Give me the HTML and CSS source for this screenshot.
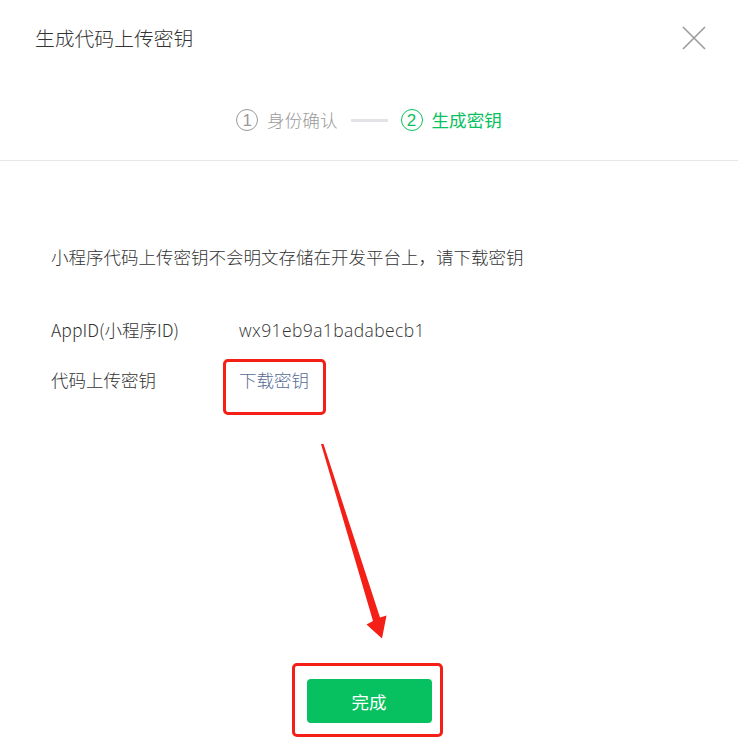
FILE: index.html
```html
<!DOCTYPE html>
<html lang="zh-CN">
<head>
<meta charset="utf-8">
<title>生成代码上传密钥</title>
<link rel="stylesheet" href="styles.css">
</head>
<body>
<div class="dialog">
  <header class="dialog-head">
    <h1 class="dialog-title">生成代码上传密钥</h1>
    <button class="close" aria-label="关闭">
      <svg width="24" height="24" viewBox="0 0 24 24"><path d="M1 1 L23 23 M23 1 L1 23" stroke="#9b9b9b" stroke-width="1.6" fill="none"/></svg>
    </button>
  </header>
  <nav class="steps">
    <div class="step done"><span class="step-num">1</span><span class="step-name">身份确认</span></div>
    <span class="step-line"></span>
    <div class="step active"><span class="step-num">2</span><span class="step-name">生成密钥</span></div>
  </nav>
  <section class="dialog-body">
    <p class="tip">小程序代码上传密钥不会明文存储在开发平台上，请下载密钥</p>
    <div class="rows">
      <div class="row"><span class="label">AppID(小程序ID)</span><span class="value">wx91eb9a1badabecb1</span></div>
      <div class="row"><span class="label">代码上传密钥</span><span class="value"><span class="marked"><a class="link" href="#">下载密钥</a><span class="mark mark-link"></span></span></span></div>
    </div>
  </section>
  <footer class="dialog-foot">
    <span class="marked"><button class="btn-primary">完成</button><span class="mark mark-btn"></span></span>
  </footer>
  <svg class="arrow" width="738" height="746" viewBox="0 0 738 746">
    <polygon points="321,444 323.5,444 380,617.5 386.5,615.5 382,638.5 366.5,624.5 373,621" fill="#f41f17"/>
  </svg>
</div>
</body>
</html>
```
FILE: styles.css
```css
* { box-sizing: border-box; }
html, body { margin: 0; padding: 0; background: #fff; }
body {
  font-family: "Noto Sans CJK SC", "Noto Sans", sans-serif;
  font-weight: 300;
  color: #333;
  width: 738px;
  height: 746px;
  overflow: hidden;
}
.dialog { position: relative; height: 746px; }
.dialog-head {
  height: 76px;
  display: flex;
  align-items: center;
  justify-content: space-between;
  padding: 0 32px 0 35px;
}
.dialog-title {
  margin: 0;
  font-size: 19.8px;
  font-weight: 300;
  line-height: 28px;
  color: #333;
}
.close {
  border: 0;
  background: none;
  padding: 0;
  width: 24px;
  height: 24px;
  display: flex;
}
.steps {
  display: flex;
  justify-content: center;
  align-items: center;
  padding: 32px 0 28px;
  border-bottom: 1px solid #e7e7eb;
  height: 85px;
}
.step { display: flex; align-items: center; gap: 9px; }
.step-num {
  width: 22px;
  height: 22px;
  border-radius: 50%;
  border: 1.2px solid currentColor;
  display: flex;
  align-items: center;
  justify-content: center;
  font-family: "Liberation Sans", sans-serif;
  font-weight: 400;
  font-size: 17px;
  line-height: 1;
}
.step-name { font-size: 17.6px; line-height: 24px; }
.step.done { color: #9a9a9a; }
.step.active { color: #07c160; font-weight: 400; }
.step-line {
  width: 37px;
  height: 3px;
  background: #e1e3e7;
  margin: 0 13px;
}
.dialog-body { padding: 0 0 0 51px; }
.tip {
  margin: 84px 0 0;
  font-size: 17.5px;
  line-height: 24px;
}
.rows { margin-top: 49px; display: flex; flex-direction: column; gap: 26px; }
.row { display: flex; font-size: 17.5px; line-height: 24px; }
.label { width: 188px; flex: none; }
.value { font-family: "Open Sans", "Noto Sans CJK SC", sans-serif; font-weight: 300; letter-spacing: 0.4px; }
.link { color: #576b95; text-decoration: none; font-family: "Noto Sans CJK SC", sans-serif; font-weight: 300; letter-spacing: 0; }
.marked { position: relative; display: inline-block; }
.mark {
  position: absolute;
  border: 3px solid #f41f17;
  border-radius: 5px;
  pointer-events: none;
}
.mark-link { left: -16px; right: -17px; top: -9px; bottom: -23px; }
.dialog-foot {
  display: flex;
  justify-content: center;
  margin-top: 287px;
}
.btn-primary {
  width: 125px;
  height: 44px;
  border: 0;
  border-radius: 4px;
  background: #07c160;
  color: #fff;
  font-family: "Noto Sans CJK SC", sans-serif;
  font-weight: 400;
  font-size: 17.5px;
  display: block;
}
.mark-btn { left: -15px; right: -11px; top: -16px; bottom: -14px; }
.arrow { position: absolute; left: 0; top: 0; pointer-events: none; }
```
